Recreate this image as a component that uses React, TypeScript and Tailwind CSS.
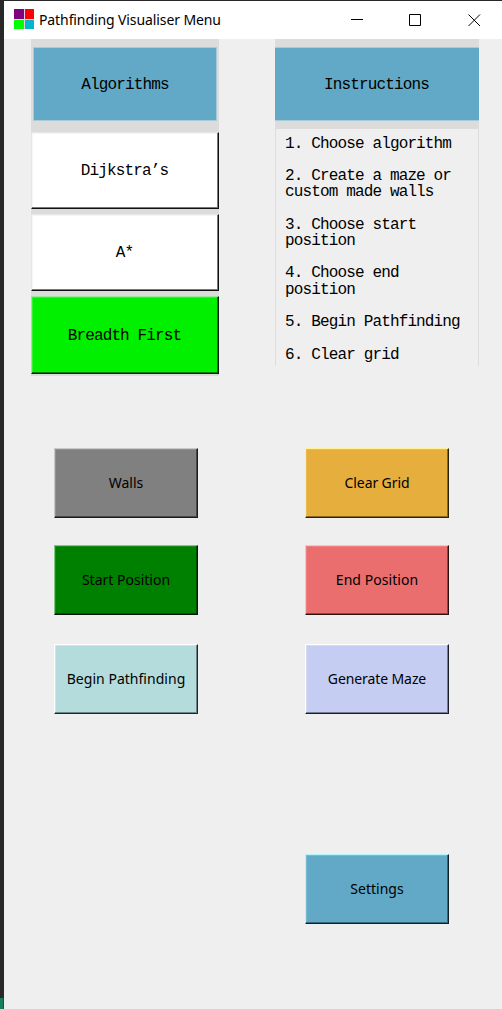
import React from "react";

const MONO = "font-['Liberation_Mono',monospace] text-[16px] tracking-[-0.86px]";
const SANS = "font-['Noto_Sans','Open_Sans',sans-serif]";

type ButtonProps = { label: string; colors: string; text?: string; className?: string };

function ActionButton({ label, colors, text = "", className = "" }: ButtonProps) {
  return (
    <button
      className={`${SANS} ${colors} ${className} flex h-[70px] items-center justify-center border pb-px text-[14px] whitespace-nowrap text-black`}
    >
      <span className={text}>{label}</span>
    </button>
  );
}

function AlgorithmButton({ label, colors }: { label: string; colors: string }) {
  return (
    <button
      className={`${MONO} ${colors} flex w-full items-center justify-center border pr-px text-black`}
    >
      {label}
    </button>
  );
}

const WHITE_BUTTON =
  "h-[77px] bg-white border-t-[#e6e6e6] border-l-[#e6e6e6] border-r-[#111111] border-b-[#111111] shadow-[inset_-1px_-1px_0_#777777,inset_1px_1px_0_#f6f6f6]";
const GREEN_BUTTON =
  "h-[78px] bg-[#00f000] pt-[2px] border-t-[#9ae89a] border-l-[#9ae89a] border-r-[#041a04] border-b-[#041a04] shadow-[inset_-1px_-1px_0_#057a05,inset_1px_1px_0_#30f030]";

const steps = [
  ["1. Choose algorithm"],
  ["2. Create a maze or", "custom made walls"],
  ["3. Choose start", "position"],
  ["4. Choose end", "position"],
  ["5. Begin Pathfinding"],
  ["6. Clear grid"],
];

function TitleBar() {
  return (
    <header className="flex h-[38px] items-center bg-white pl-[10px]">
      <div className="-mt-[2px] grid h-5 w-5 grid-cols-2 gap-[1px] bg-[#e0d0e0]">
        <i className="bg-[#800080]" />
        <i className="bg-[#ff0000]" />
        <i className="bg-[#00ff00]" />
        <i className="bg-[#00b5cc]" />
      </div>
      <h1 className={`${SANS} ml-[5px] flex-1 pb-px text-[14px] tracking-[-0.1px] whitespace-nowrap text-black`}>
        Pathfinding Visualiser Menu
      </h1>
      <svg width="132" height="14" viewBox="0 0 132 14" className="mr-[19px]" fill="none" stroke="#000">
        <path d="M0 6.5h12" />
        <path d="M58.5 1.5h11v11h-11z" />
        <path d="M117.5 1.5l11.5 11.5M129 1.5L117.5 13" />
      </svg>
    </header>
  );
}

export default function App() {
  return (
    <div className="flex h-[1009px] w-[502px] flex-col overflow-hidden bg-[#292727]">
      <div className="h-px shrink-0" />
      <div className="flex flex-1">
        <div className="flex w-1 flex-col justify-end">
          <div className="h-[11px] border-r border-[#16533e] bg-[#16805c]" />
        </div>
        <main className="flex w-[498px] flex-col bg-[#efefef]">
          <TitleBar />
          <div className="flex h-[409px] items-start gap-[56px] pl-[27px]">
            <section className="w-[188px] bg-[#dcdcdc] pt-2 pb-[2px]">
              <h2
                className={`${MONO} mr-[2px] ml-[2px] flex h-[74px] items-center justify-center border border-[#a9cbd6] bg-[#61a9c6] pt-[2px] text-black`}
              >
                Algorithms
              </h2>
              <div className="mt-[11px] flex flex-col gap-[5px]">
                <AlgorithmButton label="Dijkstra’s" colors={WHITE_BUTTON} />
                <AlgorithmButton label="A*" colors={WHITE_BUTTON} />
                <AlgorithmButton label="Breadth First" colors={GREEN_BUTTON} />
              </div>
            </section>
            <section className="w-[204px] bg-[#dcdcdc] pt-2">
              <h2
                className={`${MONO} flex h-[74px] items-center justify-center border-y border-[#a9cbd6] bg-[#61a9c6] pt-[2px] pr-px text-black`}
              >
                Instructions
              </h2>
              <div className="mt-2 flex h-[237px] flex-col gap-[16.3px] border-x border-[#dddddd] bg-[#efefef] pt-[6.5px] pl-[9px]">
                {steps.map((lines) => (
                  <p key={lines[0]} className={`${MONO} leading-[16.2px] whitespace-nowrap text-black`}>
                    {lines.map((line) => (
                      <span key={line} className="block">
                        {line}
                      </span>
                    ))}
                  </p>
                ))}
              </div>
            </section>
          </div>
          <div className="grid grid-cols-[144px_144px] gap-x-[107px] gap-y-[28px] pl-[50px]">
            <ActionButton label="Walls" colors="bg-[#808080] border-t-[#c8c8c8] border-l-[#c8c8c8] border-r-[#1c1c1c] border-b-[#1c1c1c] shadow-[inset_-1px_-1px_0_#484848,inset_1px_1px_0_#929292]" />
            <ActionButton label="Clear Grid" text="tracking-[-0.1px]" colors="bg-[#e6ae3d] border-t-[#fff09a] border-l-[#fff09a] border-r-[#2b210e] border-b-[#2b210e] shadow-[inset_-1px_-1px_0_#896826,inset_1px_1px_0_#edba4b]" />
            <ActionButton label="Start Position" className="-mt-px mb-px" colors="bg-[#008000] border-t-[#83c683] border-l-[#83c683] border-r-[#041604] border-b-[#041604] shadow-[inset_-1px_-1px_0_#044804,inset_1px_1px_0_#178d17]" />
            <ActionButton label="End Position" text="tracking-[0.05px]" className="-mt-px mb-px" colors="bg-[#eb6e6e] border-t-[#fcc0c0] border-l-[#fcc0c0] border-r-[#2a1313] border-b-[#2a1313] shadow-[inset_-1px_-1px_0_#8d4444,inset_1px_1px_0_#f27e7e]" />
            <ActionButton label="Begin Pathfinding" text="tracking-[0.03px]" colors="bg-[#b4dcdc] border-t-white border-l-white border-r-[#1c2929] border-b-[#1c2929] shadow-[inset_-1px_-1px_0_#6c8484,inset_1px_1px_0_#c9e8e8]" />
            <ActionButton label="Generate Maze" text="tracking-[-0.1px]" colors="bg-[#c6cdf2] border-t-white border-l-white border-r-[#191c29] border-b-[#191c29] shadow-[inset_-1px_-1px_0_#777c94,inset_1px_1px_0_#d3d9f6]" />
          </div>
          <div className="mt-[140px] ml-[301px] grid w-[144px]">
            <ActionButton label="Settings" colors="bg-[#61a9c6] border-t-[#b3f2f7] border-l-[#b3f2f7] border-r-[#10212a] border-b-[#10212a] shadow-[inset_-1px_-1px_0_#396678,inset_1px_1px_0_#74bbd3]" />
          </div>
        </main>
      </div>
    </div>
  );
}
